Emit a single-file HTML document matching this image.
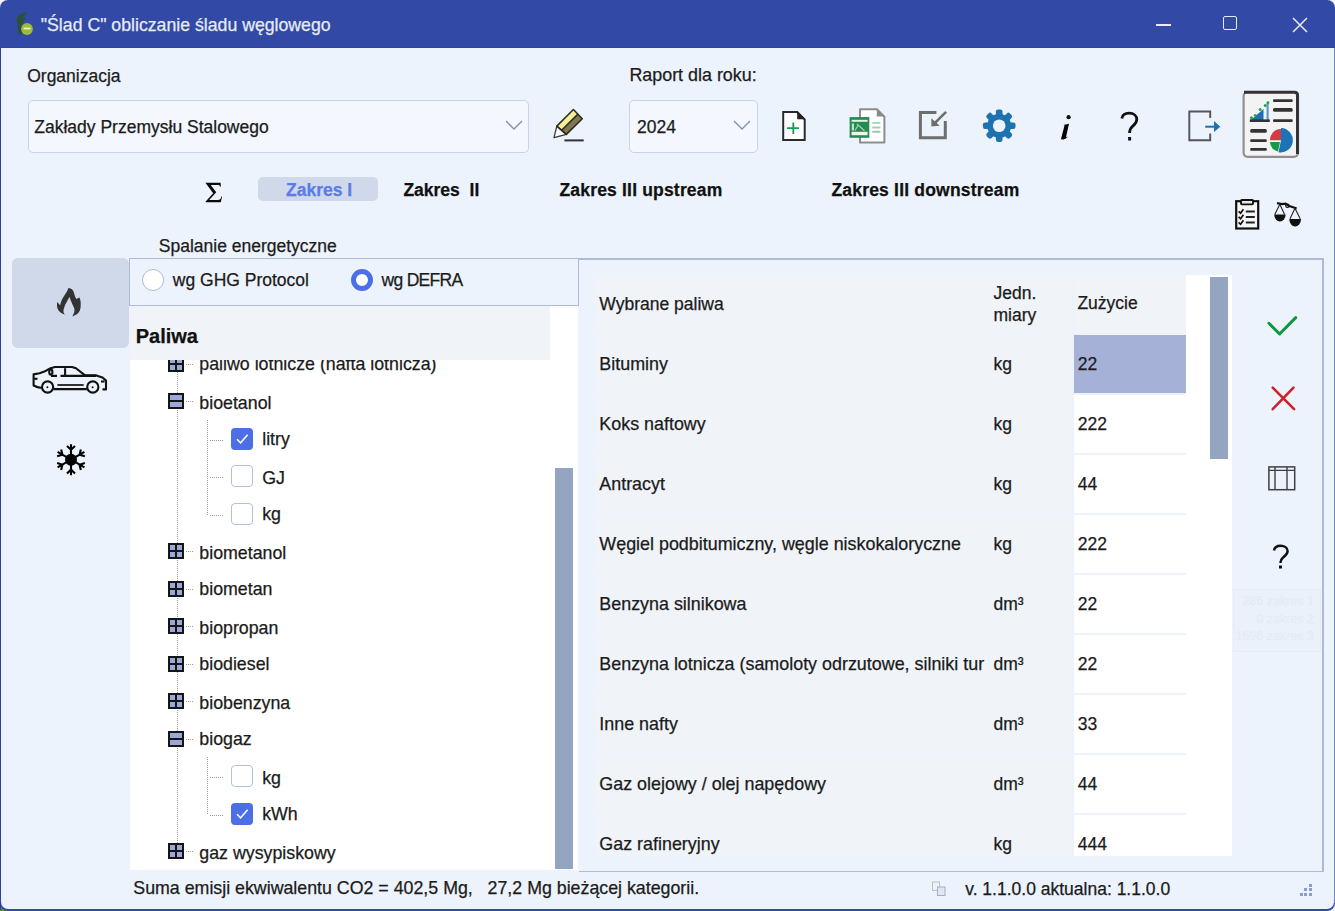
<!DOCTYPE html>
<html><head><meta charset="utf-8">
<style>
html,body{margin:0;padding:0;}
body{width:1335px;height:911px;overflow:hidden;background:#f3f3f3;position:relative;font-family:"Liberation Sans",sans-serif;}
.a{position:absolute;}
.t{position:absolute;white-space:nowrap;-webkit-text-stroke:0.25px currentColor;}
svg{position:absolute;overflow:visible;}
</style></head><body>
<div class="a" style="left:0px;top:895px;width:14px;height:16px;background:#5f8f2e;"></div>
<div class="a" style="left:0;top:0;width:1335px;height:911px;background:#3249a6;border-radius:8px;"></div>
<div class="a" style="left:1334px;top:48px;width:1px;height:855px;background:#7185c9;"></div>
<div class="a" style="left:0px;top:47px;width:1335px;height:1px;background:#2f44a2;"></div>
<div class="a" style="left:0px;top:48px;width:1px;height:862px;background:#2c3e9e;"></div>
<div class="a" style="left:1px;top:48px;width:1333px;height:861px;background:#edf3fc;border-radius:0 0 7px 7px;"></div>
<svg style="left:12px;top:8px" width="26" height="30" viewBox="0 0 26 30">
<path d="M15 4.4 C10.5 4.4 5.2 6.5 4.8 11 C4.5 14 5.8 17 6 20 C6.2 23 6.2 25 6.8 26.6 L9.8 26.2 C9.4 23 9.3 20 9.9 17.2 C10.4 14.6 12.6 12.4 14.2 10.2 C12.8 9.8 11.6 10 10.4 10.6 C11.6 8.6 13.4 6.8 15 4.4 Z" fill="#2b5238"/>
<circle cx="15" cy="21" r="5.9" fill="#9dbb3a"/>
<path d="M11.5 20.5 H18.5" stroke="#e8f2c8" stroke-width="1.8"/>
</svg>
<div class="t" style="left:40.8px;top:16.6px;font-size:17.7px;line-height:17.7px;color:#e6ebf7;">"Ślad C" obliczanie śladu węglowego</div>
<div class="a" style="left:1155.5px;top:24px;width:15.5px;height:1.5px;background:#e8ecf8;"></div>
<div class="a" style="left:1223px;top:16px;width:12px;height:12px;border:1.6px solid #e8ecf8;border-radius:2px;"></div>
<svg style="left:1292px;top:17px" width="16" height="16" viewBox="0 0 16 16"><path d="M1 1 L15 15 M15 1 L1 15" stroke="#e8ecf8" stroke-width="1.5"/></svg>
<div class="t" style="left:27.2px;top:67.7px;font-size:17.5px;line-height:17.5px;color:#1b1b1b;">Organizacja</div>
<div class="t" style="left:629.4px;top:67.2px;font-size:17.9px;line-height:17.9px;color:#1b1b1b;">Raport dla roku:</div>
<div class="a" style="left:28px;top:100px;width:499px;height:51px;border:1px solid #c9d3e7;border-radius:5px;background:#f4f7fd;"></div>
<div class="t" style="left:34.3px;top:118.7px;font-size:17.5px;line-height:17.5px;color:#1b1b1b;">Zakłady Przemysłu Stalowego</div>
<svg style="left:505px;top:120px" width="18" height="10" viewBox="0 0 18 10"><path d="M1 1 L9 9 L17 1" fill="none" stroke="#7d8fb8" stroke-width="1.3"/></svg>
<div class="a" style="left:629px;top:100px;width:127px;height:51px;border:1px solid #c9d3e7;border-radius:5px;background:#f4f7fd;"></div>
<div class="t" style="left:637.0px;top:118.8px;font-size:17.5px;line-height:17.5px;color:#1b1b1b;">2024</div>
<svg style="left:733px;top:120px" width="18" height="10" viewBox="0 0 18 10"><path d="M1 1 L9 9 L17 1" fill="none" stroke="#7d8fb8" stroke-width="1.3"/></svg>
<svg style="left:548px;top:104px" width="42" height="42" viewBox="0 0 42 42">
<path d="M25.4 5.5 L29.85 10.15 L13.6 26.25 L8.8 22.1 Z" fill="#f6ef98"/>
<path d="M29.85 10.15 L34.3 14.8 L18.4 30.4 L13.6 26.25 Z" fill="#7c7952"/>
<path d="M8.8 22.1 L18.4 30.4 L6 33.7 Z" fill="#fdfdfd" stroke="#3a3a3a" stroke-width="1.3" stroke-linejoin="round"/>
<path d="M25.4 5.5 L34.3 14.8 L18.4 30.4 L8.8 22.1 Z M29.85 10.15 L13.6 26.25" fill="none" stroke="#2a2a22" stroke-width="1.5" stroke-linejoin="round"/>
<rect x="16.4" y="35.4" width="19.3" height="2" fill="#333"/>
</svg>
<svg style="left:776px;top:104px" width="36" height="42" viewBox="0 0 36 42">
<path d="M7.2 8.1 H21.2 L28.7 15.6 V35.9 H7.2 Z" fill="#fff" stroke="#2b2b2b" stroke-width="2"/>
<path d="M21.2 7.1 L29.7 15.2 H21.2 Z" fill="#222"/>
<path d="M11 24.2 H23 M17.3 18.4 V30" stroke="#1a9a50" stroke-width="1.8"/>
</svg>
<svg style="left:844px;top:103px" width="46" height="46" viewBox="0 0 46 46">
<path d="M16 6.3 H32.8 L40.4 13.6 V39.4 H16 Z" fill="#fff" stroke="#8d8d8d" stroke-width="2" stroke-linejoin="round"/>
<path d="M32.8 5.3 L40.9 13.6 H32.8 Z" fill="#8a8a8a"/>
<rect x="28" y="19" width="8.6" height="2" rx="1" fill="#a8dcbf"/>
<rect x="28" y="23.5" width="8.6" height="2" rx="1" fill="#a9cbb6"/>
<rect x="28" y="27.8" width="8.6" height="2" rx="1" fill="#a9bfb1"/>
<rect x="5.6" y="14.1" width="19.7" height="20.7" fill="#238d50"/>
<rect x="7.6" y="16.8" width="16" height="2" fill="#e3f1e7"/>
<rect x="7.6" y="28.8" width="16" height="3.4" fill="#f0f7f2"/>
<rect x="7.8" y="20.5" width="2.2" height="7" fill="#bfe0ca"/>
<path d="M11 27.5 L14.5 21.5 M13 21 L20.5 27.8" stroke="#9fd0b2" stroke-width="1.3"/>
</svg>
<svg style="left:912px;top:104px" width="42" height="42" viewBox="0 0 42 42">
<path d="M24.4 8.4 H8.4 V33.8 H33.3 V17" fill="none" stroke="#6e6e6e" stroke-width="3"/>
<path d="M34.1 7.8 L22.5 19.4" stroke="#6e6e6e" stroke-width="2.6"/>
<path d="M19.4 14.3 L19.4 22.6 L27.7 21.7 Z" fill="#6e6e6e"/>
</svg>
<svg style="left:978px;top:104px" width="42" height="42" viewBox="0 0 42 42"><g fill="#1c73b0">
<circle cx="21.2" cy="21.7" r="12"/><rect x="17.9" y="5.4" width="6.6" height="9" rx="2.2" transform="rotate(0 21.2 21.7)"/><rect x="17.9" y="5.4" width="6.6" height="9" rx="2.2" transform="rotate(45 21.2 21.7)"/><rect x="17.9" y="5.4" width="6.6" height="9" rx="2.2" transform="rotate(90 21.2 21.7)"/><rect x="17.9" y="5.4" width="6.6" height="9" rx="2.2" transform="rotate(135 21.2 21.7)"/><rect x="17.9" y="5.4" width="6.6" height="9" rx="2.2" transform="rotate(180 21.2 21.7)"/><rect x="17.9" y="5.4" width="6.6" height="9" rx="2.2" transform="rotate(225 21.2 21.7)"/><rect x="17.9" y="5.4" width="6.6" height="9" rx="2.2" transform="rotate(270 21.2 21.7)"/><rect x="17.9" y="5.4" width="6.6" height="9" rx="2.2" transform="rotate(315 21.2 21.7)"/></g>
<circle cx="21.2" cy="21.7" r="6.3" fill="#edf3fc"/>
</svg>
<svg style="left:1050px;top:104px" width="30" height="42" viewBox="0 0 30 42">
<circle cx="18.6" cy="13.2" r="2.1" fill="#111"/>
<path d="M13.3 20.9 L19 19.7 L15.9 33.4 L17.4 32.6 L17.2 33.6 Q15.6 35.4 13.2 35.4 L10.9 35.3 L14.6 21.3 Z" fill="#050505"/>
</svg>
<svg style="left:1120px;top:112px" width="20" height="30" viewBox="0 0 20 30">
<path d="M1.8 6.5 C2.3 3 5 1.2 9.2 1.2 C13.8 1.2 16.8 3.8 16.8 7.6 C16.8 10.8 14.8 12.4 12.6 14.3 C10.6 16 9.6 17.3 9.6 21" fill="none" stroke="#111" stroke-width="2.8"/>
<rect x="8.1" y="25" width="3" height="3.5" fill="#111"/>
</svg>
<svg style="left:1180px;top:100px" width="50" height="50" viewBox="0 0 50 50">
<path d="M30.2 18.1 V11.5 H9.3 V40.3 H30.2 V33.5" fill="none" stroke="#555" stroke-width="1.9"/>
<path d="M25.2 26.7 H35" stroke="#1c73b0" stroke-width="2"/>
<path d="M34 21.1 L40.3 26.7 L34 32.1 Z" fill="#1c73b0"/>
</svg>
<svg style="left:1236px;top:86px" width="70" height="76" viewBox="0 0 70 76">
<rect x="7.6" y="6" width="54.4" height="64.8" rx="4" fill="#f3f3f3" stroke="#8f8f8f" stroke-width="2.2"/>
<path d="M8 6.3 H58.5 Q61.5 6.3 61.5 9.3 V68" fill="none" stroke="#333" stroke-width="3"/>
<path d="M14.5 34.2 L27.5 23 V34.2 Z" fill="#1c6fb2"/>
<path d="M31.6 16.5 V34" stroke="#5a9ad0" stroke-width="2.2"/>
<circle cx="15.4" cy="31.8" r="1.5" fill="#2aa04a"/><circle cx="19.2" cy="29.2" r="1.3" fill="#2aa04a"/><circle cx="24.2" cy="23.4" r="1.5" fill="#2aa04a"/><circle cx="29.2" cy="19.6" r="1.5" fill="#2aa04a"/><circle cx="32" cy="16.7" r="1.4" fill="#2aa04a"/>
<rect x="13.8" y="33.4" width="20" height="2.6" fill="#333"/>
<rect x="37" y="13.3" width="19.7" height="2.6" rx="1" fill="#333"/>
<rect x="37" y="22" width="19.7" height="3.8" rx="1.5" fill="#333"/>
<rect x="37" y="33.3" width="19.7" height="2.8" rx="1" fill="#333"/>
<rect x="14.2" y="43" width="16.6" height="3.8" rx="1.5" fill="#333"/>
<rect x="14.2" y="53.2" width="16.6" height="2.8" rx="1" fill="#333"/>
<rect x="14.2" y="62" width="16.6" height="2.8" rx="1" fill="#333"/>
<path d="M45 54.2 V42 A12.2 12.2 0 1 1 42.5 66.2 L45 54.2 Z" fill="#1c73b5"/>
<path d="M45 54.2 H34 A11 11 0 0 1 45 43 Z" fill="#d83a3f"/>
<path d="M44 56 L42 65.5 A10 10 0 0 1 34 56 Z" fill="#169a48"/>
</svg>
<svg style="left:1233px;top:197px" width="30" height="34" viewBox="0 0 30 34">
<rect x="3.2" y="4.2" width="22" height="27.3" fill="#f6f6f6" stroke="#111" stroke-width="2.2"/>
<rect x="8" y="3" width="12" height="4.4" rx="0.8" fill="#e8e8e8" stroke="#111" stroke-width="1.9"/>
<path d="M5.6 14.3 L7.6 16.2 L10.4 12.2 M5.6 19.8 L7.6 21.7 L10.4 17.7 M5.6 25.4 L7.6 27.3 L10.4 23.3" fill="none" stroke="#111" stroke-width="1.7"/>
<path d="M12.8 14.6 H21.8 M12.8 19.9 H21.8 M12.8 25.6 H21.8" stroke="#222" stroke-width="2"/>
</svg>
<svg style="left:1272px;top:200px" width="32" height="30" viewBox="0 0 32 30">
<path d="M5 3.2 L10 4.2 L13.5 3.6 L17 6 L20.5 7 L24.6 8.6" fill="none" stroke="#111" stroke-width="2.2"/>
<circle cx="15.4" cy="5.8" r="1.7" fill="none" stroke="#111" stroke-width="1.2"/>
<path d="M7.7 4.5 L2.8 14.5 M7.9 4.5 L12.6 14.5 M22.9 8.6 L18 18.8 M23.1 8.6 L28.2 18.8" fill="none" stroke="#222" stroke-width="1.1"/>
<path d="M2.2 14.5 H13.6 A5.7 7 0 0 1 2.2 14.5 Z" fill="#111"/>
<path d="M17.3 19 H29 A5.85 7.5 0 0 1 17.3 19 Z" fill="#111"/>
</svg>
<svg style="left:198px;top:176px" width="32" height="32" viewBox="0 0 32 32">
<path d="M7.4 6.8 L22.6 6.8 L22.9 10.4 L22.1 10.4 C21.7 9.2 21 8.9 19.5 8.9 L12.8 8.9 L18.2 16.3 L11.2 24.1 L20 24.1 C21.8 24.1 22.8 23.2 23.4 20.6 L24.1 20.6 L22.8 26.3 L7.7 26.3 L7.7 25.6 L15.2 17.2 Z" fill="#0a0a0a"/>
</svg>
<div class="a" style="left:258px;top:177px;width:120px;height:24px;background:#cfd9e9;border-radius:5px;"></div>
<div class="t" style="left:286.0px;top:181.8px;font-size:17.5px;line-height:17.5px;color:#5a7ce8;font-weight:bold;">Zakres I</div>
<div class="t" style="left:403.4px;top:181.8px;font-size:17.5px;line-height:17.5px;color:#111;font-weight:bold;">Zakres&nbsp; II</div>
<div class="t" style="left:559.5px;top:182.0px;font-size:17.5px;line-height:17.5px;color:#111;font-weight:bold;letter-spacing:0.18px;">Zakres III upstream</div>
<div class="t" style="left:831.4px;top:182.0px;font-size:17.5px;line-height:17.5px;color:#111;font-weight:bold;letter-spacing:0.2px;">Zakres III downstream</div>
<div class="a" style="left:12px;top:258px;width:117px;height:90px;background:#cfd9e9;border-radius:6px;"></div>
<svg style="left:50px;top:280px" width="40" height="45" viewBox="0 0 40 45">
<path d="M18.5 8 C21 7.8 23.5 10 24 13 C24.8 16 25.5 18 26.5 19 L29.5 17.5 C30.8 20 31 24 30.5 28 C30 31.5 28 34 24.5 35.5 L22.3 36.5 C24 33 25 31 24.3 28.5 C23.5 26 22 24 21 21 C20.3 19.5 20 18 19.5 17 C18.5 18.5 17.5 20.5 16.5 22.5 C15 24 14.5 27 13.5 30 C13.3 32 13.8 33.5 15 34.8 C11 33.5 8 31 7.2 27.5 C6.8 25.5 7 23.5 7.3 22 C8.5 23.5 9.5 24.8 10.2 25 C11 21 13 17 15 14.5 C16.5 12.5 17.8 10 18.5 8 Z" fill="#333"/>
</svg>
<svg style="left:24px;top:358px" width="90" height="42" viewBox="0 0 90 42">
<g fill="none" stroke="#111" stroke-width="2.1" stroke-linejoin="round">
<path d="M17.8 30 C14 29.5 11.5 28.5 9.6 27.5 V16.4 L15.5 15.3 L20.3 13.6 L26.5 10.3 L31 9 H48 L52 10.3 L61 17.4 H72.3 L78.5 19.5 L82 22.6 V31.4 H78.5"/>
<path d="M27 17.9 H33 M36.5 17.9 H72"/>
<path d="M41.1 10.2 V17.9"/>
<path d="M29.6 31.1 H62.8"/>
<circle cx="23.6" cy="29" r="5.6"/>
<circle cx="68.8" cy="29" r="5.6"/>
<path d="M10 20.8 H13.5"/>
<ellipse cx="26.8" cy="14" rx="1.6" ry="2.6"/>
<path d="M77 23.5 H80.5"/>
</g>
<path d="M33.4 27 H59.7" stroke="#333" stroke-width="2"/>
<circle cx="23.4" cy="29.2" r="1" fill="#111"/><circle cx="68.6" cy="29.2" r="1" fill="#111"/>
</svg>
<svg style="left:50px;top:438px" width="42" height="42" viewBox="0 0 42 42">
<g fill="none" stroke="#000" stroke-width="2.1" stroke-linecap="butt"><g transform="rotate(0 21 21.7)"><path d="M21 21.7 V6.2 M21 11.8 L17 8 M21 11.8 L25 8" /></g><g transform="rotate(60 21 21.7)"><path d="M21 21.7 V6.2 M21 11.8 L17 8 M21 11.8 L25 8" /></g><g transform="rotate(120 21 21.7)"><path d="M21 21.7 V6.2 M21 11.8 L17 8 M21 11.8 L25 8" /></g><g transform="rotate(180 21 21.7)"><path d="M21 21.7 V6.2 M21 11.8 L17 8 M21 11.8 L25 8" /></g><g transform="rotate(240 21 21.7)"><path d="M21 21.7 V6.2 M21 11.8 L17 8 M21 11.8 L25 8" /></g><g transform="rotate(300 21 21.7)"><path d="M21 21.7 V6.2 M21 11.8 L17 8 M21 11.8 L25 8" /></g></g>
<circle cx="21" cy="21.7" r="6" fill="#000"/>
</svg>
<div class="t" style="left:158.8px;top:238.2px;font-size:17.5px;line-height:17.5px;color:#1b1b1b;">Spalanie energetyczne</div>
<div class="a" style="left:129px;top:258px;width:450px;height:48px;border:1.5px solid #adbbd9;box-sizing:border-box;"></div>
<div class="a" style="left:142px;top:269px;width:22px;height:22px;box-sizing:border-box;border:1.2px solid #aebcd9;border-radius:50%;background:#fff;"></div>
<div class="t" style="left:172.8px;top:271.5px;font-size:17.5px;line-height:17.5px;color:#1b1b1b;">wg GHG Protocol</div>
<div class="a" style="left:351px;top:269px;width:22px;height:22px;box-sizing:border-box;border:5.6px solid #4c6fe7;border-radius:50%;background:#fff;"></div>
<div class="t" style="left:381.5px;top:272.0px;font-size:17.5px;line-height:17.5px;color:#1b1b1b;letter-spacing:-0.7px;">wg DEFRA</div>
<div class="a" style="left:130px;top:306px;width:448px;height:564px;background:#ffffff;"></div>
<div class="a" style="left:130px;top:306px;width:420px;height:54px;background:#f0f4f9;"></div>
<div class="t" style="left:135.7px;top:326.1px;font-size:20px;line-height:20px;color:#111;font-weight:bold;">Paliwa</div>
<div class="a" style="left:130px;top:360px;width:425px;height:510px;overflow:hidden;">
<div class="a" style="left:47.0px;top:-60.0px;width:1px;height:552px;background:repeating-linear-gradient(to bottom,#9a9a9a 0 1px,transparent 1px 2px);"></div>
<div class="a" style="left:56.0px;top:4.0px;width:8px;height:1px;background:repeating-linear-gradient(to right,#9a9a9a 0 1px,transparent 1px 2px);"></div>
<div class="a" style="left:38px;top:-4px;width:16px;height:16px;box-sizing:border-box;border:2px solid #151515;background:#9ca9d8;"></div>
<div class="a" style="left:45.0px;top:-3.0px;width:2px;height:14px;background:#151515;"></div>
<div class="a" style="left:39.0px;top:3.0px;width:14px;height:2px;background:#151515;"></div>
<div class="t" style="left:69.3px;top:-4.4px;font-size:17.8px;line-height:17.8px;color:#1b1b1b;">paliwo lotnicze (nafta lotnicza)</div>
<div class="a" style="left:56.0px;top:41.0px;width:8px;height:1px;background:repeating-linear-gradient(to right,#9a9a9a 0 1px,transparent 1px 2px);"></div>
<div class="a" style="left:38px;top:33px;width:16px;height:16px;box-sizing:border-box;border:2px solid #151515;background:#9ca9d8;"></div>
<div class="a" style="left:39.0px;top:40.0px;width:14px;height:2px;background:#151515;"></div>
<div class="t" style="left:69.3px;top:34.5px;font-size:17.8px;line-height:17.8px;color:#1b1b1b;">bioetanol</div>
<div class="a" style="left:80.0px;top:80.0px;width:14px;height:1px;background:repeating-linear-gradient(to right,#9a9a9a 0 1px,transparent 1px 2px);"></div>
<div class="a" style="left:101px;top:68px;width:22px;height:22px;border-radius:4px;background:#4c6fe7;"></div>
<svg style="left:101px;top:68px" width="22" height="22" viewBox="0 0 22 22"><path d="M6 11.2 L9.6 14.8 L16.6 6.8" fill="none" stroke="#fff" stroke-width="1.5"/></svg>
<div class="t" style="left:132.2px;top:70.6px;font-size:17.8px;line-height:17.8px;color:#1b1b1b;">litry</div>
<div class="a" style="left:80.0px;top:117.0px;width:14px;height:1px;background:repeating-linear-gradient(to right,#9a9a9a 0 1px,transparent 1px 2px);"></div>
<div class="a" style="left:101px;top:105px;width:22px;height:22px;box-sizing:border-box;border:1.3px solid #b3c0dc;border-radius:4px;background:#fff;"></div>
<div class="t" style="left:132.2px;top:109.5px;font-size:17.8px;line-height:17.8px;color:#1b1b1b;">GJ</div>
<div class="a" style="left:80.0px;top:155.0px;width:14px;height:1px;background:repeating-linear-gradient(to right,#9a9a9a 0 1px,transparent 1px 2px);"></div>
<div class="a" style="left:101px;top:143px;width:22px;height:22px;box-sizing:border-box;border:1.3px solid #b3c0dc;border-radius:4px;background:#fff;"></div>
<div class="t" style="left:132.2px;top:145.6px;font-size:17.8px;line-height:17.8px;color:#1b1b1b;">kg</div>
<div class="a" style="left:56.0px;top:191.0px;width:8px;height:1px;background:repeating-linear-gradient(to right,#9a9a9a 0 1px,transparent 1px 2px);"></div>
<div class="a" style="left:38px;top:183px;width:16px;height:16px;box-sizing:border-box;border:2px solid #151515;background:#9ca9d8;"></div>
<div class="a" style="left:45.0px;top:184.0px;width:2px;height:14px;background:#151515;"></div>
<div class="a" style="left:39.0px;top:190.0px;width:14px;height:2px;background:#151515;"></div>
<div class="t" style="left:69.3px;top:184.5px;font-size:17.8px;line-height:17.8px;color:#1b1b1b;">biometanol</div>
<div class="a" style="left:56.0px;top:229.0px;width:8px;height:1px;background:repeating-linear-gradient(to right,#9a9a9a 0 1px,transparent 1px 2px);"></div>
<div class="a" style="left:38px;top:221px;width:16px;height:16px;box-sizing:border-box;border:2px solid #151515;background:#9ca9d8;"></div>
<div class="a" style="left:45.0px;top:222.0px;width:2px;height:14px;background:#151515;"></div>
<div class="a" style="left:39.0px;top:228.0px;width:14px;height:2px;background:#151515;"></div>
<div class="t" style="left:69.3px;top:220.6px;font-size:17.8px;line-height:17.8px;color:#1b1b1b;">biometan</div>
<div class="a" style="left:56.0px;top:266.0px;width:8px;height:1px;background:repeating-linear-gradient(to right,#9a9a9a 0 1px,transparent 1px 2px);"></div>
<div class="a" style="left:38px;top:258px;width:16px;height:16px;box-sizing:border-box;border:2px solid #151515;background:#9ca9d8;"></div>
<div class="a" style="left:45.0px;top:259.0px;width:2px;height:14px;background:#151515;"></div>
<div class="a" style="left:39.0px;top:265.0px;width:14px;height:2px;background:#151515;"></div>
<div class="t" style="left:69.3px;top:259.5px;font-size:17.8px;line-height:17.8px;color:#1b1b1b;">biopropan</div>
<div class="a" style="left:56.0px;top:304.0px;width:8px;height:1px;background:repeating-linear-gradient(to right,#9a9a9a 0 1px,transparent 1px 2px);"></div>
<div class="a" style="left:38px;top:296px;width:16px;height:16px;box-sizing:border-box;border:2px solid #151515;background:#9ca9d8;"></div>
<div class="a" style="left:45.0px;top:297.0px;width:2px;height:14px;background:#151515;"></div>
<div class="a" style="left:39.0px;top:303.0px;width:14px;height:2px;background:#151515;"></div>
<div class="t" style="left:69.3px;top:295.6px;font-size:17.8px;line-height:17.8px;color:#1b1b1b;">biodiesel</div>
<div class="a" style="left:56.0px;top:341.0px;width:8px;height:1px;background:repeating-linear-gradient(to right,#9a9a9a 0 1px,transparent 1px 2px);"></div>
<div class="a" style="left:38px;top:333px;width:16px;height:16px;box-sizing:border-box;border:2px solid #151515;background:#9ca9d8;"></div>
<div class="a" style="left:45.0px;top:334.0px;width:2px;height:14px;background:#151515;"></div>
<div class="a" style="left:39.0px;top:340.0px;width:14px;height:2px;background:#151515;"></div>
<div class="t" style="left:69.3px;top:334.5px;font-size:17.8px;line-height:17.8px;color:#1b1b1b;">biobenzyna</div>
<div class="a" style="left:56.0px;top:379.0px;width:8px;height:1px;background:repeating-linear-gradient(to right,#9a9a9a 0 1px,transparent 1px 2px);"></div>
<div class="a" style="left:38px;top:371px;width:16px;height:16px;box-sizing:border-box;border:2px solid #151515;background:#9ca9d8;"></div>
<div class="a" style="left:39.0px;top:378.0px;width:14px;height:2px;background:#151515;"></div>
<div class="t" style="left:69.3px;top:370.6px;font-size:17.8px;line-height:17.8px;color:#1b1b1b;">biogaz</div>
<div class="a" style="left:80.0px;top:417.0px;width:14px;height:1px;background:repeating-linear-gradient(to right,#9a9a9a 0 1px,transparent 1px 2px);"></div>
<div class="a" style="left:101px;top:405px;width:22px;height:22px;box-sizing:border-box;border:1.3px solid #b3c0dc;border-radius:4px;background:#fff;"></div>
<div class="t" style="left:132.2px;top:409.5px;font-size:17.8px;line-height:17.8px;color:#1b1b1b;">kg</div>
<div class="a" style="left:80.0px;top:455.0px;width:14px;height:1px;background:repeating-linear-gradient(to right,#9a9a9a 0 1px,transparent 1px 2px);"></div>
<div class="a" style="left:101px;top:443px;width:22px;height:22px;border-radius:4px;background:#4c6fe7;"></div>
<svg style="left:101px;top:443px" width="22" height="22" viewBox="0 0 22 22"><path d="M6 11.2 L9.6 14.8 L16.6 6.8" fill="none" stroke="#fff" stroke-width="1.5"/></svg>
<div class="t" style="left:132.2px;top:445.6px;font-size:17.8px;line-height:17.8px;color:#1b1b1b;">kWh</div>
<div class="a" style="left:56.0px;top:491.0px;width:8px;height:1px;background:repeating-linear-gradient(to right,#9a9a9a 0 1px,transparent 1px 2px);"></div>
<div class="a" style="left:38px;top:483px;width:16px;height:16px;box-sizing:border-box;border:2px solid #151515;background:#9ca9d8;"></div>
<div class="a" style="left:45.0px;top:484.0px;width:2px;height:14px;background:#151515;"></div>
<div class="a" style="left:39.0px;top:490.0px;width:14px;height:2px;background:#151515;"></div>
<div class="t" style="left:69.3px;top:484.5px;font-size:17.8px;line-height:17.8px;color:#1b1b1b;">gaz wysypiskowy</div>
<div class="a" style="left:77.0px;top:60.0px;width:1px;height:95px;background:repeating-linear-gradient(to bottom,#9a9a9a 0 1px,transparent 1px 2px);"></div>
<div class="a" style="left:77.0px;top:397.0px;width:1px;height:57px;background:repeating-linear-gradient(to bottom,#9a9a9a 0 1px,transparent 1px 2px);"></div>
</div>
<div class="a" style="left:555px;top:468px;width:18px;height:401px;background:#94a5c1;"></div>
<div class="a" style="left:579px;top:258px;width:744px;height:1.5px;background:#adbbd9;"></div>
<div class="a" style="left:1322px;top:258px;width:1.5px;height:614px;background:#adbbd9;"></div>
<div class="a" style="left:579px;top:870.5px;width:744px;height:1.5px;background:#adbbd9;"></div>
<div class="a" style="left:595px;top:274px;width:591px;height:582px;overflow:hidden;background:#edf3fc;">
<div class="a" style="left:0.0px;top:0.0px;width:393px;height:59px;background:#f0f4f9;"></div>
<div class="a" style="left:395.0px;top:0.0px;width:82px;height:59px;background:#f0f4f9;"></div>
<div class="a" style="left:479.0px;top:0.0px;width:112px;height:59px;background:#f0f4f9;"></div>
<div class="t" style="left:4.3px;top:21.6px;font-size:17.5px;line-height:17.5px;color:#1b1b1b;">Wybrane paliwa</div>
<div class="t" style="left:398.5px;top:10.8px;font-size:17.5px;line-height:17.5px;color:#1b1b1b;">Jedn.</div>
<div class="t" style="left:398.5px;top:32.8px;font-size:17.5px;line-height:17.5px;color:#1b1b1b;">miary</div>
<div class="t" style="left:482.4px;top:21.2px;font-size:17.5px;line-height:17.5px;color:#1b1b1b;">Zużycie</div>
<div class="a" style="left:0.0px;top:60.5px;width:393px;height:58px;background:#f0f4f9;"></div>
<div class="a" style="left:395.0px;top:60.5px;width:82px;height:58px;background:#f0f4f9;"></div>
<div class="a" style="left:479.0px;top:60.5px;width:112px;height:58px;background:#a6b1d8;"></div>
<div class="a" style="left:4px;top:60.5px;width:385.6px;height:58px;overflow:hidden;">
<div class="t" style="left:0.3px;top:21.2px;font-size:17.9px;line-height:17.9px;color:#1b1b1b;">Bituminy</div></div>
<div class="t" style="left:398.5px;top:82.1px;font-size:17.5px;line-height:17.5px;color:#1b1b1b;">kg</div>
<div class="t" style="left:482.8px;top:82.1px;font-size:17.5px;line-height:17.5px;color:#1b1b1b;">22</div>
<div class="a" style="left:0.0px;top:120.5px;width:393px;height:58px;background:#f0f4f9;"></div>
<div class="a" style="left:395.0px;top:120.5px;width:82px;height:58px;background:#f0f4f9;"></div>
<div class="a" style="left:479.0px;top:120.5px;width:112px;height:58px;background:#ffffff;"></div>
<div class="a" style="left:4px;top:120.5px;width:385.6px;height:58px;overflow:hidden;">
<div class="t" style="left:0.3px;top:21.2px;font-size:17.9px;line-height:17.9px;color:#1b1b1b;">Koks naftowy</div></div>
<div class="t" style="left:398.5px;top:142.1px;font-size:17.5px;line-height:17.5px;color:#1b1b1b;">kg</div>
<div class="t" style="left:482.8px;top:142.1px;font-size:17.5px;line-height:17.5px;color:#1b1b1b;">222</div>
<div class="a" style="left:0.0px;top:180.5px;width:393px;height:58px;background:#f0f4f9;"></div>
<div class="a" style="left:395.0px;top:180.5px;width:82px;height:58px;background:#f0f4f9;"></div>
<div class="a" style="left:479.0px;top:180.5px;width:112px;height:58px;background:#ffffff;"></div>
<div class="a" style="left:4px;top:180.5px;width:385.6px;height:58px;overflow:hidden;">
<div class="t" style="left:0.3px;top:21.2px;font-size:17.9px;line-height:17.9px;color:#1b1b1b;">Antracyt</div></div>
<div class="t" style="left:398.5px;top:202.1px;font-size:17.5px;line-height:17.5px;color:#1b1b1b;">kg</div>
<div class="t" style="left:482.8px;top:202.1px;font-size:17.5px;line-height:17.5px;color:#1b1b1b;">44</div>
<div class="a" style="left:0.0px;top:240.5px;width:393px;height:58px;background:#f0f4f9;"></div>
<div class="a" style="left:395.0px;top:240.5px;width:82px;height:58px;background:#f0f4f9;"></div>
<div class="a" style="left:479.0px;top:240.5px;width:112px;height:58px;background:#ffffff;"></div>
<div class="a" style="left:4px;top:240.5px;width:385.6px;height:58px;overflow:hidden;">
<div class="t" style="left:0.3px;top:21.2px;font-size:17.9px;line-height:17.9px;color:#1b1b1b;">Węgiel podbitumiczny, węgle niskokaloryczne</div></div>
<div class="t" style="left:398.5px;top:262.1px;font-size:17.5px;line-height:17.5px;color:#1b1b1b;">kg</div>
<div class="t" style="left:482.8px;top:262.1px;font-size:17.5px;line-height:17.5px;color:#1b1b1b;">222</div>
<div class="a" style="left:0.0px;top:300.5px;width:393px;height:58px;background:#f0f4f9;"></div>
<div class="a" style="left:395.0px;top:300.5px;width:82px;height:58px;background:#f0f4f9;"></div>
<div class="a" style="left:479.0px;top:300.5px;width:112px;height:58px;background:#ffffff;"></div>
<div class="a" style="left:4px;top:300.5px;width:385.6px;height:58px;overflow:hidden;">
<div class="t" style="left:0.3px;top:21.2px;font-size:17.9px;line-height:17.9px;color:#1b1b1b;">Benzyna silnikowa</div></div>
<div class="t" style="left:398.5px;top:322.1px;font-size:17.5px;line-height:17.5px;color:#1b1b1b;">dm³</div>
<div class="t" style="left:482.8px;top:322.1px;font-size:17.5px;line-height:17.5px;color:#1b1b1b;">22</div>
<div class="a" style="left:0.0px;top:360.5px;width:393px;height:58px;background:#f0f4f9;"></div>
<div class="a" style="left:395.0px;top:360.5px;width:82px;height:58px;background:#f0f4f9;"></div>
<div class="a" style="left:479.0px;top:360.5px;width:112px;height:58px;background:#ffffff;"></div>
<div class="a" style="left:4px;top:360.5px;width:385.6px;height:58px;overflow:hidden;">
<div class="t" style="left:0.3px;top:21.2px;font-size:17.9px;line-height:17.9px;color:#1b1b1b;">Benzyna lotnicza (samoloty odrzutowe, silniki tur</div></div>
<div class="t" style="left:398.5px;top:382.1px;font-size:17.5px;line-height:17.5px;color:#1b1b1b;">dm³</div>
<div class="t" style="left:482.8px;top:382.1px;font-size:17.5px;line-height:17.5px;color:#1b1b1b;">22</div>
<div class="a" style="left:0.0px;top:420.5px;width:393px;height:58px;background:#f0f4f9;"></div>
<div class="a" style="left:395.0px;top:420.5px;width:82px;height:58px;background:#f0f4f9;"></div>
<div class="a" style="left:479.0px;top:420.5px;width:112px;height:58px;background:#ffffff;"></div>
<div class="a" style="left:4px;top:420.5px;width:385.6px;height:58px;overflow:hidden;">
<div class="t" style="left:0.3px;top:21.2px;font-size:17.9px;line-height:17.9px;color:#1b1b1b;">Inne nafty</div></div>
<div class="t" style="left:398.5px;top:442.1px;font-size:17.5px;line-height:17.5px;color:#1b1b1b;">dm³</div>
<div class="t" style="left:482.8px;top:442.1px;font-size:17.5px;line-height:17.5px;color:#1b1b1b;">33</div>
<div class="a" style="left:0.0px;top:480.5px;width:393px;height:58px;background:#f0f4f9;"></div>
<div class="a" style="left:395.0px;top:480.5px;width:82px;height:58px;background:#f0f4f9;"></div>
<div class="a" style="left:479.0px;top:480.5px;width:112px;height:58px;background:#ffffff;"></div>
<div class="a" style="left:4px;top:480.5px;width:385.6px;height:58px;overflow:hidden;">
<div class="t" style="left:0.3px;top:21.2px;font-size:17.9px;line-height:17.9px;color:#1b1b1b;">Gaz olejowy / olej napędowy</div></div>
<div class="t" style="left:398.5px;top:502.1px;font-size:17.5px;line-height:17.5px;color:#1b1b1b;">dm³</div>
<div class="t" style="left:482.8px;top:502.1px;font-size:17.5px;line-height:17.5px;color:#1b1b1b;">44</div>
<div class="a" style="left:0.0px;top:540.5px;width:393px;height:58px;background:#f0f4f9;"></div>
<div class="a" style="left:395.0px;top:540.5px;width:82px;height:58px;background:#f0f4f9;"></div>
<div class="a" style="left:479.0px;top:540.5px;width:112px;height:58px;background:#ffffff;"></div>
<div class="a" style="left:4px;top:540.5px;width:385.6px;height:58px;overflow:hidden;">
<div class="t" style="left:0.3px;top:21.2px;font-size:17.9px;line-height:17.9px;color:#1b1b1b;">Gaz rafineryjny</div></div>
<div class="t" style="left:398.5px;top:562.1px;font-size:17.5px;line-height:17.5px;color:#1b1b1b;">kg</div>
<div class="t" style="left:482.8px;top:562.1px;font-size:17.5px;line-height:17.5px;color:#1b1b1b;">444</div>
</div>
<div class="a" style="left:1186px;top:274.5px;width:46px;height:581px;background:#ffffff;"></div>
<div class="a" style="left:1210px;top:276.5px;width:18px;height:182px;background:#94a5c1;"></div>
<svg style="left:1255px;top:305px" width="50" height="115" viewBox="0 0 50 115">
<path d="M13.9 18.3 L24.6 29 L40.7 12.6" fill="none" stroke="#0e9640" stroke-width="3" stroke-linecap="round" stroke-linejoin="round"/>
<path d="M17.7 82.7 L39.1 104.2 M38.5 82.7 L17.7 104.2" stroke="#d0202a" stroke-width="2.6" stroke-linecap="round"/>
</svg>
<svg style="left:1260px;top:455px" width="45" height="120" viewBox="0 0 45 120">
<rect x="8.9" y="11.9" width="25.8" height="22.8" fill="none" stroke="#3f3f3f" stroke-width="1.5"/>
<path d="M8.9 15.4 H34.7 M15 11.9 V34.7 M27 11.9 V34.7" stroke="#3f3f3f" stroke-width="1.4"/>
<path d="M14 95.5 C14.5 92.5 17 90.8 20.5 90.8 C24.5 90.8 27.6 92.8 27.6 96 C27.6 99.5 25 101 22.8 102.8 C21 104.3 20.6 106 20.4 108" fill="none" stroke="#111" stroke-width="2.5"/>
<rect x="19" y="110.5" width="3" height="3" fill="#111"/>
</svg>
<div class="a" style="left:1232.5px;top:588.5px;width:88px;height:63px;background:#ebf1fb;box-shadow:inset 0 0 0 1px #e6edf8;"></div>
<div class="t" style="right:21px;top:595.4px;font-size:12.5px;line-height:12.5px;color:#e5ebf4;">286 zakres 1</div>
<div class="t" style="right:21px;top:612.9px;font-size:12.5px;line-height:12.5px;color:#e5ebf4;">0 zakres 2</div>
<div class="t" style="right:21px;top:630.4px;font-size:12.5px;line-height:12.5px;color:#e5ebf4;">1696 zakres 3</div>
<div class="t" style="left:133.3px;top:880.1px;font-size:17.8px;line-height:17.8px;color:#1b1b1b;">Suma emisji ekwiwalentu CO2 = 402,5 Mg,&nbsp;&nbsp; 27,2 Mg bieżącej kategorii.</div>
<div class="t" style="left:965.2px;top:880.5px;font-size:17.5px;line-height:17.5px;color:#1b1b1b;">v. 1.1.0.0 aktualna: 1.1.0.0</div>
<svg style="left:930px;top:880px" width="18" height="18" viewBox="0 0 18 18">
<rect x="2.5" y="2" width="7" height="8.5" fill="#eef1f5" stroke="#b9c0cc" stroke-width="1"/>
<rect x="7.5" y="7" width="7.5" height="8.5" fill="#dfe7f3" stroke="#9fb0c8" stroke-width="1"/>
</svg>
<div class="a" style="left:1309px;top:884px;width:3px;height:3px;background:#8a9ccc;"></div>
<div class="a" style="left:1304px;top:888px;width:3px;height:3px;background:#8a9ccc;"></div>
<div class="a" style="left:1309px;top:888px;width:3px;height:3px;background:#8a9ccc;"></div>
<div class="a" style="left:1300px;top:893px;width:3px;height:3px;background:#8a9ccc;"></div>
<div class="a" style="left:1304px;top:893px;width:3px;height:3px;background:#8a9ccc;"></div>
<div class="a" style="left:1309px;top:893px;width:3px;height:3px;background:#8a9ccc;"></div>
</body></html>
